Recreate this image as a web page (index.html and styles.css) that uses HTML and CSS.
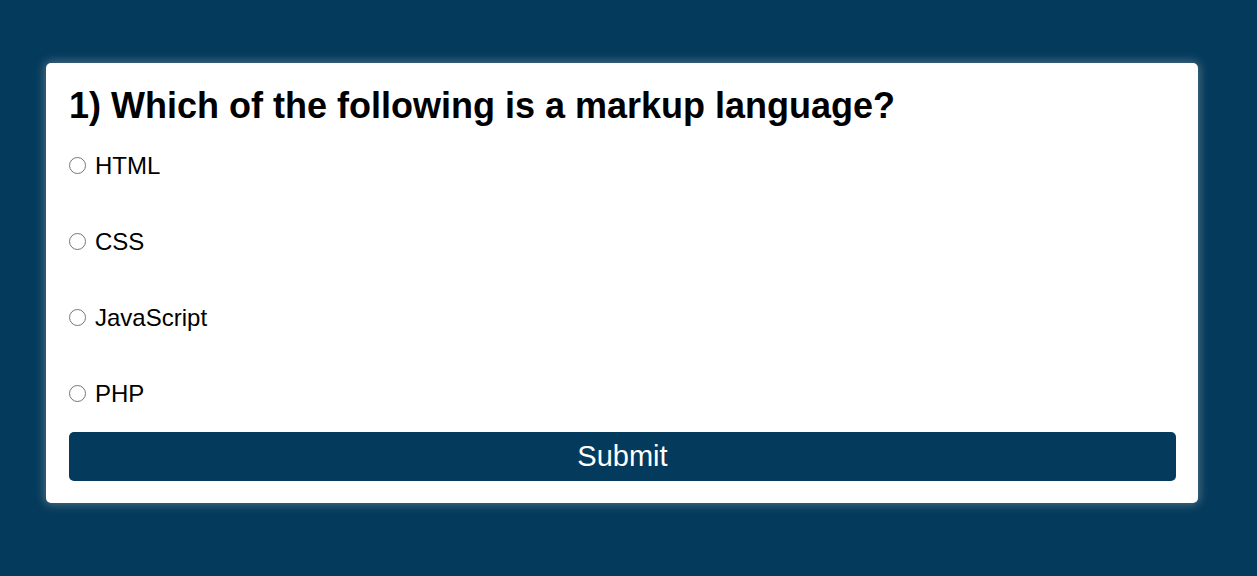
FILE: index.html
```html
<!DOCTYPE html>
<html>
<head>
<meta charset="utf-8">
<link rel="stylesheet" href="styles.css">
</head>
<body>
<div class="quiz">
  <h2 class="question">1) Which of the following is a markup language?</h2>
  <ul class="answers">
    <li><label class="answer"><input type="radio" name="answer"><span>HTML</span></label></li>
    <li><label class="answer"><input type="radio" name="answer"><span>CSS</span></label></li>
    <li><label class="answer"><input type="radio" name="answer"><span>JavaScript</span></label></li>
    <li><label class="answer"><input type="radio" name="answer"><span>PHP</span></label></li>
  </ul>
  <button class="submit">Submit</button>
</div>
</body>
</html>
```
FILE: styles.css
```css
html, body {
  margin: 0;
  padding: 0;
}
body {
  background: #043a5c;
  font-family: "Liberation Sans", Arial, sans-serif;
  padding: 63px 59px 0 46px;
  min-height: 576px;
  box-sizing: border-box;
}
.quiz {
  background: #fff;
  border-radius: 5px;
  box-shadow: 0 0 10px 2px rgba(200, 200, 200, 0.35);
  padding: 22px 22px 22px 23px;
  display: flex;
  flex-direction: column;
}
.question {
  margin: 0;
  font-size: 36px;
  font-weight: bold;
  line-height: 41px;
  color: #000;
}
.answers {
  list-style: none;
  margin: 26px 0 0 0;
  padding: 0;
  display: flex;
  flex-direction: column;
  gap: 48px;
}
.answer {
  display: flex;
  align-items: center;
  font-size: 24px;
  line-height: 28px;
  color: #000;
}
.answer input {
  appearance: none;
  -webkit-appearance: none;
  box-sizing: border-box;
  width: 17px;
  height: 17px;
  border: 1.6px solid #767676;
  border-radius: 50%;
  background: #fff;
  margin: -2px 9px 0 0;
  flex: none;
}
.answer input:checked {
  border-color: #043a5c;
  box-shadow: inset 0 0 0 3px #fff;
  background: #043a5c;
}
.submit {
  margin-top: 24px;
  height: 49px;
  border: none;
  border-radius: 5px;
  background: #043a5c;
  color: #fff;
  font-family: "Liberation Sans", Arial, sans-serif;
  font-size: 29px;
  padding: 0;
  cursor: pointer;
}
```
